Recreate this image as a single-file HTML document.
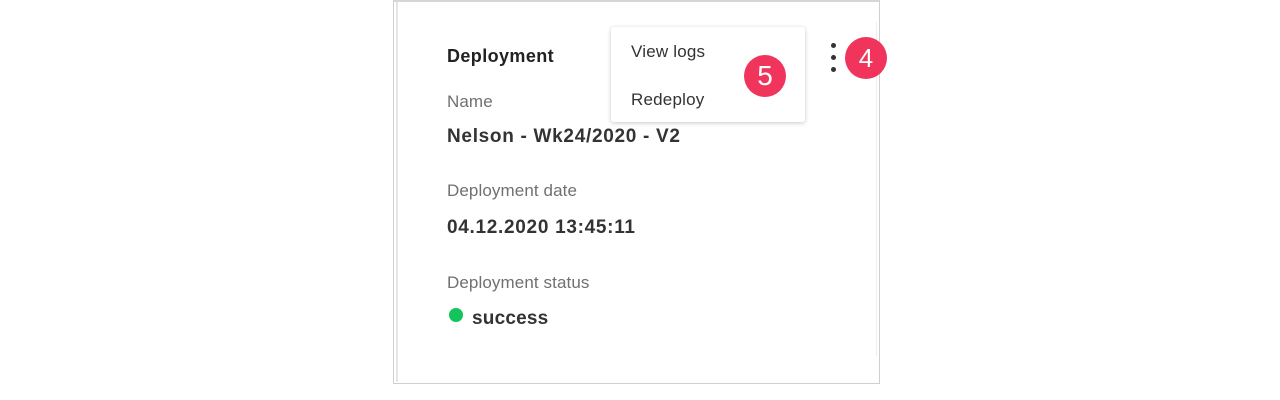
<!DOCTYPE html>
<html><head><style>
body{margin:0;width:1280px;height:400px;background:#fff;font-family:"Liberation Sans",Arial,sans-serif;position:relative;overflow:hidden}
.a{position:absolute}
.card{left:393px;top:0;width:485px;height:381px;border:1px solid #cfcfcf;border-top:2px solid #d6d6d6;box-sizing:content-box}
.inl{left:396px;top:2px;width:2px;height:380px;background:#e6e6e6}
.inr{left:876px;top:22px;width:1px;height:334px;background:#ececec}
.lbl{color:#707070;font-size:17px;letter-spacing:0.1px}
.val{color:#333;font-size:19px;font-weight:bold;letter-spacing:0.7px}
.menu{left:611px;top:27px;width:194px;height:95px;background:#fff;border-radius:3px;box-shadow:0 1px 5px rgba(0,0,0,.22)}
.mi{font-size:17px;color:#333;letter-spacing:0.6px}
.badge{width:42px;height:42px;border-radius:50%;background:#f0345c;color:#fff;font-size:28px;text-align:center;line-height:42px}
.dot{width:5px;height:5px;border-radius:50%;background:#333;left:831px}
</style></head><body>
<div class="a card"></div>
<div class="a inl"></div>
<div class="a inr"></div>
<div class="a val" style="left:447px;top:46px;font-size:18px;color:#222;letter-spacing:0.4px">Deployment</div>
<div class="a lbl" style="left:447px;top:92px">Name</div>
<div class="a val" style="left:447px;top:126px">Nelson - Wk24/2020 - V2</div>
<div class="a lbl" style="left:447px;top:181px">Deployment date</div>
<div class="a val" style="left:447px;top:217px">04.12.2020 13:45:11</div>
<div class="a lbl" style="left:447px;top:273px">Deployment status</div>
<div class="a" style="left:449px;top:308px;width:14px;height:14px;border-radius:50%;background:#12c45a"></div>
<div class="a val" style="left:472px;top:308px;letter-spacing:0.2px">success</div>
<div class="a menu"></div>
<div class="a mi" style="left:631px;top:42px;letter-spacing:0.2px">View logs</div>
<div class="a mi" style="left:631px;top:90px;letter-spacing:0.2px">Redeploy</div>
<div class="a badge" style="left:744px;top:55px">5</div>
<div class="a dot" style="top:43px"></div>
<div class="a dot" style="top:55px"></div>
<div class="a dot" style="top:67px"></div>
<div class="a badge" style="left:845px;top:37px;font-size:26px">4</div>
</body></html>
